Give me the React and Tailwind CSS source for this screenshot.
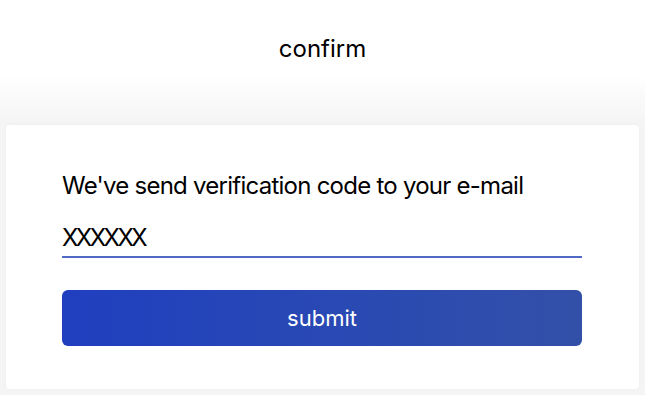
export default function App() {
  return (
    <div
      className="min-h-screen w-full bg-[#f5f5f5] text-black"
      style={{ fontFamily: "Inter, 'Noto Sans', sans-serif" }}
    >
      {/* Header */}
      <div className="h-[125px] w-full bg-gradient-to-b from-white via-white via-60% to-[#f4f4f4] flex justify-center pt-[34px]">
        <h1 className="text-[24px] leading-[30px] font-normal">confirm</h1>
      </div>

      {/* Card */}
      <div className="mx-[6px] h-[264px] bg-white rounded-[4px] shadow-[0_0_6px_rgba(0,0,0,0.03)] px-[56px] pt-[45px]">
        <p className="text-[24px] leading-[32px] tracking-[-0.75px]">We've send verification code to your e-mail</p>
        <div className="mt-[20px] w-[520px] border-b-2 border-[#5069c2]">
          <input
            type="text"
            defaultValue="XXXXXX"
            className="w-full bg-transparent text-[24px] leading-[32px] tracking-[-2.5px] pb-[2px] focus:outline-none"
          />
        </div>
        <button
          type="button"
          className="mt-[32px] w-[520px] h-[56px] rounded-[6px] bg-gradient-to-r from-[#1f3fc0] to-[#3350a8] text-white text-[22px]"
        >
          submit
        </button>
      </div>
    </div>
  );
}
